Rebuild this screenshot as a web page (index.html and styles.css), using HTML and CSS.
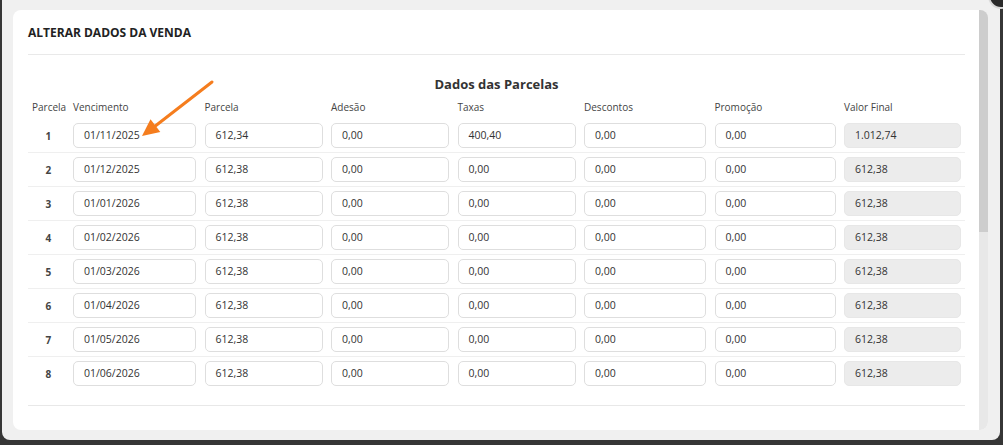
FILE: index.html
```html
<!DOCTYPE html>
<html lang="pt-BR">
<head>
<meta charset="utf-8">
<title>Alterar Dados da Venda</title>
<link rel="stylesheet" href="styles.css">
</head>
<body>
<div class="frame">
  <div class="card">
    <div class="content">
      <div class="title">ALTERAR DADOS DA VENDA</div>
      <div class="section-title">Dados das Parcelas</div>
      <div class="grid labels">
        <div class="num-label">Parcela</div>
        <div>Vencimento</div>
        <div>Parcela</div>
        <div>Adesão</div>
        <div>Taxas</div>
        <div>Descontos</div>
        <div>Promoção</div>
        <div>Valor Final</div>
      </div>
      <div class="rows">
        <div class="grid row"><div class="num">1</div><div class="field">01/11/2025</div><div class="field">612,34</div><div class="field">0,00</div><div class="field">400,40</div><div class="field">0,00</div><div class="field">0,00</div><div class="field ro">1.012,74</div></div>
        <div class="grid row"><div class="num">2</div><div class="field">01/12/2025</div><div class="field">612,38</div><div class="field">0,00</div><div class="field">0,00</div><div class="field">0,00</div><div class="field">0,00</div><div class="field ro">612,38</div></div>
        <div class="grid row"><div class="num">3</div><div class="field">01/01/2026</div><div class="field">612,38</div><div class="field">0,00</div><div class="field">0,00</div><div class="field">0,00</div><div class="field">0,00</div><div class="field ro">612,38</div></div>
        <div class="grid row"><div class="num">4</div><div class="field">01/02/2026</div><div class="field">612,38</div><div class="field">0,00</div><div class="field">0,00</div><div class="field">0,00</div><div class="field">0,00</div><div class="field ro">612,38</div></div>
        <div class="grid row"><div class="num">5</div><div class="field">01/03/2026</div><div class="field">612,38</div><div class="field">0,00</div><div class="field">0,00</div><div class="field">0,00</div><div class="field">0,00</div><div class="field ro">612,38</div></div>
        <div class="grid row"><div class="num">6</div><div class="field">01/04/2026</div><div class="field">612,38</div><div class="field">0,00</div><div class="field">0,00</div><div class="field">0,00</div><div class="field">0,00</div><div class="field ro">612,38</div></div>
        <div class="grid row"><div class="num">7</div><div class="field">01/05/2026</div><div class="field">612,38</div><div class="field">0,00</div><div class="field">0,00</div><div class="field">0,00</div><div class="field">0,00</div><div class="field ro">612,38</div></div>
        <div class="grid row"><div class="num">8</div><div class="field">01/06/2026</div><div class="field">612,38</div><div class="field">0,00</div><div class="field">0,00</div><div class="field">0,00</div><div class="field">0,00</div><div class="field ro">612,38</div></div>
      </div>
      <div class="bottom-line"></div>
    </div>
    <div class="scrollbar"><div class="thumb"></div></div>
  </div>
</div>
<div class="close-btn"></div>
<svg class="arrow" width="90" height="75" viewBox="0 0 90 75" xmlns="http://www.w3.org/2000/svg">
  <line x1="82" y1="12" x2="24" y2="57" stroke="#f57d1e" stroke-width="3" stroke-linecap="round"/>
  <polygon points="12,66 30.3,61.9 20.5,49.3" fill="#f57d1e"/>
</svg>
</body>
</html>
```
FILE: styles.css
```css
html, body {
  margin: 0;
  padding: 0;
}
body {
  width: 1003px;
  height: 445px;
  overflow: hidden;
  background: #363636;
  font-family: "Open Sans", "Noto Sans", sans-serif;
  position: relative;
}
.frame {
  margin-left: 2px;
  width: 998px;
  height: 440px;
  box-sizing: border-box;
  background: #f0f0f0;
  border-radius: 0 0 8px 8px;
  padding: 10px 12px 10px 11px;
}
.card {
  display: flex;
  height: 420px;
  background: #fff;
  border-radius: 8px;
  overflow: hidden;
}
.content {
  flex: 1;
  padding: 0 14px 0 15px;
}
.scrollbar {
  width: 9px;
  background: #e8e8e8;
  display: flex;
  flex-direction: column;
}
.thumb {
  height: 222px;
  background: #cdcdcd;
}
.title {
  font-size: 12px;
  font-weight: 700;
  color: #222;
  line-height: 17px;
  padding: 14px 0 13px;
  border-bottom: 1px solid #e9e9e9;
}
.section-title {
  margin-top: 20px;
  font-size: 13px;
  font-weight: 700;
  line-height: 18px;
  color: #333;
  text-align: center;
}
.grid {
  display: grid;
  grid-template-columns: 36.5px 123px 118px 118px 118px 122px 121px 117px;
  column-gap: 8.5px;
  align-items: center;
}
.labels {
  margin-top: 7px;
  margin-bottom: 5px;
  font-size: 10px;
  line-height: 14px;
  color: #444;
}
.num-label,
.num {
  text-align: center;
  padding-left: 4px;
}
.row {
  padding: 4px 0;
}
.row + .row {
  border-top: 1px solid #efefef;
}
.num {
  font-size: 10px;
  font-weight: 700;
  color: #444;
}
.field {
  height: 25px;
  box-sizing: border-box;
  border: 1px solid #dedede;
  border-radius: 5px;
  padding-left: 10px;
  font-size: 10.5px;
  line-height: 23px;
  color: #333;
  background: #fff;
}
.field.ro {
  background: #ececec;
  border-color: #e7e7e7;
}
.bottom-line {
  margin-top: 15px;
  border-top: 1px solid #e8e8e8;
}
.close-btn {
  position: absolute;
  left: 988px;
  top: -17px;
  width: 22px;
  height: 22px;
  border-radius: 50%;
  background: #2a2a2a;
  border: 2px solid #d9d9d9;
}
.arrow {
  position: absolute;
  left: 130px;
  top: 70px;
}
```
